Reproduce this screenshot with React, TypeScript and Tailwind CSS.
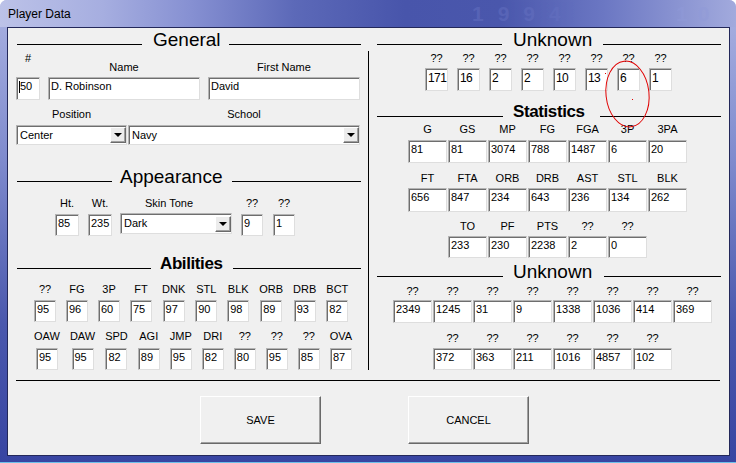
import React from "react";

type BoxProps = { value: string; box: string; text?: string; cursor?: boolean };

function Box({ value, box, text = "text-[11px] leading-[13px] pt-[2px]", cursor }: BoxProps) {
  return (
    <div
      className={`flex items-start pl-[2px] bg-white border border-t-[#b4b4b4] border-l-[#b4b4b4] border-r-[#dedede] border-b-[#dedede] shadow-[inset_1px_1px_0_#6e6e6e] text-black overflow-hidden ${text} ${box}`}
    >
      {cursor && <span className="w-px h-[12px] mt-[1px] bg-black shrink-0" />}
      <span className="whitespace-nowrap">{value}</span>
    </div>
  );
}

type FieldProps = { label: string; value: string; box: string; lab?: string; text?: string; cursor?: boolean };

function Field({ label, value, box, lab = "mb-[3px]", text, cursor }: FieldProps) {
  return (
    <div className="flex flex-col items-center">
      <div className={`text-[11px] leading-[13px] h-[13px] whitespace-nowrap ${lab}`}>{label}</div>
      <Box value={value} box={box} text={text} cursor={cursor} />
    </div>
  );
}

function Select({ value, box }: { value: string; box: string }) {
  return (
    <div
      className={`flex items-center justify-between bg-white border border-t-[#b4b4b4] border-l-[#b4b4b4] border-r-[#dedede] border-b-[#dedede] shadow-[inset_1px_1px_0_#6e6e6e] ${box}`}
    >
      <span className="pl-[3px] text-[11px] leading-[13px] text-black">{value}</span>
      <div className="w-[16px] h-[16px] bg-[#ececec] border border-t-white border-l-white border-b-[#6a6a6a] border-r-[#6a6a6a] shadow-[inset_-1px_-1px_0_#a0a0a0] flex items-center justify-center">
        <div className="w-0 h-0 border-l-[4px] border-r-[4px] border-t-[4px] border-l-transparent border-r-transparent border-t-black" />
      </div>
    </div>
  );
}

type HeadingProps = { title: string; left: string; textCls: string; right: string; className?: string };

function Heading({ title, left, textCls, right, className = "" }: HeadingProps) {
  return (
    <div className={`flex items-center h-[22px] ${className}`}>
      <div className={`h-px bg-black mt-[8px] shrink-0 ${left}`} />
      <span className={`whitespace-nowrap text-black ${textCls}`}>{title}</span>
      <div className={`h-px bg-black mt-[8px] flex-1 ${right}`} />
    </div>
  );
}

const REG = "text-[19px] leading-[22px]";
const BOLD = "text-[17px] leading-[22px] font-bold tracking-[-0.4px]";

const abil1 = [
  ["??", "95"], ["FG", "96"], ["3P", "60"], ["FT", "75"], ["DNK", "97"],
  ["STL", "90"], ["BLK", "98"], ["ORB", "89"], ["DRB", "93"], ["BCT", "82"],
];
const abil2 = [
  ["OAW", "95"], ["DAW", "95"], ["SPD", "82"], ["AGI", "89"], ["JMP", "95"],
  ["DRI", "82"], ["??", "80"], ["??", "95"], ["??", "85"], ["OVA", "87"],
];
const unk1 = ["171", "16", "2", "2", "10", "13", "6", "1"];
const stat1 = [["G", "81"], ["GS", "81"], ["MP", "3074"], ["FG", "788"], ["FGA", "1487"], ["3P", "6"], ["3PA", "20"]];
const stat2 = [["FT", "656"], ["FTA", "847"], ["ORB", "234"], ["DRB", "643"], ["AST", "236"], ["STL", "134"], ["BLK", "262"]];
const stat3 = [["TO", "233"], ["PF", "230"], ["PTS", "2238"], ["??", "2"], ["??", "0"]];
const unk2a = ["2349", "1245", "31", "9", "1338", "1036", "414", "369"];
const unk2b = ["372", "363", "211", "1016", "4857", "102"];

function WinButton({ label }: { label: string }) {
  return (
    <div className="w-[121px] h-[48px] bg-[#f0f0f0] border border-t-white border-l-white border-b-[#696969] border-r-[#696969] shadow-[inset_-1px_-1px_0_#a0a0a0] flex items-center justify-center text-[11px] leading-[13px] text-black">
      {label}
    </div>
  );
}

export default function App() {
  return (
    <div className="relative w-[736px] h-[463px] overflow-hidden rounded-t-[7px] font-['Liberation_Sans',Arial,sans-serif] bg-[linear-gradient(to_bottom,#aab2e2_0%,#7e8acd_35%,#4a58ad_70%,#3845a2_100%)] border-b border-b-[#6cc0ea]">
      {/* title bar */}
      <div className="relative h-[27px] bg-[linear-gradient(90deg,#bcc2e8_0%,#a6aee0_14%,#8690d2_26%,#5c69b8_40%,#4855ab_55%,#4a57ac_68%,#6b77c3_82%,#a2aadd_100%)] overflow-hidden">
        <span className="absolute left-[472px] top-[2px] text-[21px] font-bold tracking-[14px] text-[#6470c0] opacity-50 leading-[24px] select-none">1994</span>
        <span className="absolute left-[676px] top-[2px] text-[21px] font-bold tracking-[10px] text-[#8f99d8] opacity-50 leading-[24px] select-none">10</span>
        <div className="relative pl-[8px] pt-[7px] text-[12px] leading-[14px] text-black">Player Data</div>
      </div>

      {/* client area */}
      <div className="ml-[7px] w-[723px] h-[429px] border border-[#23285a] bg-[#f0f0f0] flex flex-col text-black">
        <div className="flex">
          {/* left column */}
          <div className="w-[360px] flex flex-col">
            <Heading title="General" left="w-[125px] ml-[9px]" textCls={`${REG} ml-[11px]`} right="ml-[8px] mr-[7px]" className="mt-[1px]" />
            <div className="flex items-end ml-[8px] gap-[8px] mt-[1px]">
              <Field label="#" value="50" box="w-[24px] h-[23px]" lab="mb-[12px]" cursor />
              <Field label="Name" value="D. Robinson" box="w-[152px] h-[23px]" />
              <Field label="First Name" value="David" box="w-[152px] h-[23px]" />
            </div>
            <div className="flex items-start ml-[8px] gap-[1px] mt-[8px]">
              <div className="flex flex-col items-center">
                <div className="text-[11px] leading-[13px] h-[13px] mb-[4px]">Position</div>
                <Select value="Center" box="w-[111px] h-[20px]" />
              </div>
              <div className="flex flex-col items-center">
                <div className="text-[11px] leading-[13px] h-[13px] mb-[4px]">School</div>
                <Select value="Navy" box="w-[232px] h-[20px]" />
              </div>
            </div>

            <Heading title="Appearance" left="w-[95px] ml-[9px]" textCls={`${REG} ml-[8px]`} right="ml-[10px] mr-[7px]" className="mt-[21px]" />
            <div className="flex items-start ml-[47px] mt-[9px]">
              <Field label="Ht." value="85" box="w-[24px] h-[22px]" lab="mb-[4px]" />
              <div className="ml-[9px]">
                <Field label="Wt." value="235" box="w-[24px] h-[22px]" lab="mb-[4px]" />
              </div>
              <div className="ml-[8px] flex flex-col items-center">
                <div className="text-[11px] leading-[13px] h-[13px] mb-[3px] mr-[14px]">Skin Tone</div>
                <Select value="Dark" box="w-[112px] h-[21px]" />
              </div>
              <div className="ml-[9px]">
                <Field label="??" value="9" box="w-[22px] h-[22px]" lab="mb-[4px]" />
              </div>
              <div className="ml-[10px]">
                <Field label="??" value="1" box="w-[22px] h-[22px]" lab="mb-[4px]" />
              </div>
            </div>

            <Heading title="Abilities" left="w-[134px] ml-[9px]" textCls={`${BOLD} ml-[9px]`} right="ml-[10px] mr-[7px]" className="mt-[17px]" />
            <div className="flex items-start ml-[26px] gap-[10px] mt-[8px]">
              {abil1.map(([l, v], i) => (
                <Field key={i} label={l} value={v} box="w-[22px] h-[22px]" lab="mb-[4px]" />
              ))}
            </div>
            <div className="flex items-start ml-[26px] gap-[10px] mt-[8px]">
              {abil2.map(([l, v], i) => (
                <Field key={i} label={l} value={v} box="w-[22px] h-[22px]" lab="mb-[5px]" />
              ))}
            </div>
          </div>

          {/* divider */}
          <div className="w-px bg-black mt-[23px] h-[319px] shrink-0" />

          {/* right column */}
          <div className="flex-1 flex flex-col">
            <Heading title="Unknown" left="w-[125px] ml-[8px]" textCls={`${REG} ml-[11px]`} right="ml-[11px] mr-[8px]" className="mt-[1px]" />
            <div className="flex items-start ml-[56px] gap-[9px] mt-[1px]">
              {unk1.map((v, i) => (
                <Field key={i} label="??" value={v} box="w-[23px] h-[23px]" text="text-[12px] leading-[14px] pt-[2px] tracking-[-0.6px]" />
              ))}
            </div>

            <Heading title="Statistics" left="w-[126px] ml-[8px]" textCls={`${BOLD} ml-[10px]`} right="ml-[15px] mr-[8px]" className="mt-[10px]" />
            <div className="flex items-start ml-[39px] gap-[1px]">
              {stat1.map(([l, v], i) => (
                <Field key={i} label={l} value={v} box="w-[39px] h-[23px]" lab="mb-[4px]" />
              ))}
            </div>
            <div className="flex items-start ml-[39px] gap-[1px] mt-[9px]">
              {stat2.map(([l, v], i) => (
                <Field key={i} label={l} value={v} box="w-[39px] h-[24px]" lab="mb-[3px]" />
              ))}
            </div>
            <div className="flex items-start ml-[79px] gap-[1px] mt-[8px]">
              {stat3.map(([l, v], i) => (
                <Field key={i} label={l} value={v} box="w-[39px] h-[22px]" lab="mb-[3px]" />
              ))}
            </div>

            <Heading title="Unknown" left="w-[126px] ml-[8px]" textCls={`${REG} ml-[10px]`} right="ml-[12px] mr-[8px]" className="mt-[3px]" />
            <div className="flex items-start ml-[24px] gap-[1px] mt-[2px]">
              {unk2a.map((v, i) => (
                <Field key={i} label="??" value={v} box="w-[39px] h-[23px]" lab="mb-[2px]" />
              ))}
            </div>
            <div className="flex items-start ml-[64px] gap-[1px] mt-[9px]">
              {unk2b.map((v, i) => (
                <Field key={i} label="??" value={v} box="w-[39px] h-[22px]" lab="mb-[3px]" />
              ))}
            </div>
          </div>
        </div>

        <div className="ml-[8px] w-[704px] h-px bg-black mt-[10px]" />

        <div className="flex ml-[192px] mt-[15px] gap-[87px]">
          <WinButton label="SAVE" />
          <WinButton label="CANCEL" />
        </div>
      </div>

      {/* red annotation ellipse */}
      <svg className="absolute left-0 top-0 pointer-events-none" width="736" height="463" viewBox="0 0 736 463">
        <ellipse cx="627.5" cy="94" rx="21.5" ry="33" fill="none" stroke="#e00000" strokeWidth="1" transform="rotate(-6 627.5 94)" />
        <rect x="605" y="73" width="1" height="1" fill="#e00000" />
        <rect x="632" y="99" width="1" height="1" fill="#e00000" />
      </svg>
    </div>
  );
}
